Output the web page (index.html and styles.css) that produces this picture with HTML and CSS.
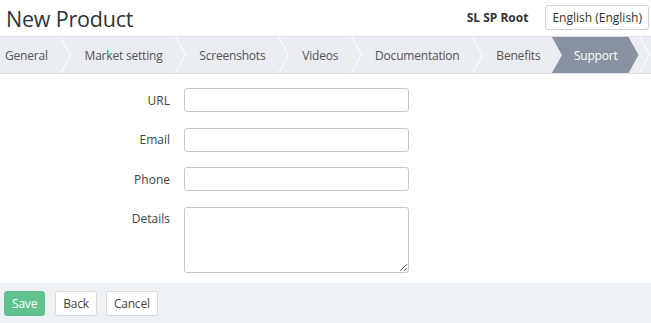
FILE: index.html
```
<!DOCTYPE html>
<html lang="en">
<head>
  <meta charset="UTF-8" />
  <meta name="viewport" content="width=device-width, initial-scale=1.0"/>
  <title>New Product</title>
  <link rel="stylesheet" href="styles.css">
</head>
<body>
  <header class="topbar">
    <h1 class="title">New Product</h1>
    <div class="account">
      <span class="account-name">SL SP Root</span>
      <button class="lang">English (English)</button>
    </div>
  </header>

  <nav class="steps">
    <span class="step first">General</span>
    <svg class="sep" viewBox="0 0 11 37"><polyline points="0.5,0 10.5,18.5 0.5,37" /></svg>
    <span class="step">Market setting</span>
    <svg class="sep" viewBox="0 0 11 37"><polyline points="0.5,0 10.5,18.5 0.5,37" /></svg>
    <span class="step">Screenshots</span>
    <svg class="sep" viewBox="0 0 11 37"><polyline points="0.5,0 10.5,18.5 0.5,37" /></svg>
    <span class="step">Videos</span>
    <svg class="sep" viewBox="0 0 11 37"><polyline points="0.5,0 10.5,18.5 0.5,37" /></svg>
    <span class="step">Documentation</span>
    <svg class="sep" viewBox="0 0 11 37"><polyline points="0.5,0 10.5,18.5 0.5,37" /></svg>
    <span class="step">Benefits</span>
    <span class="step active">Support</span>
    <svg class="sep" viewBox="0 0 11 37"><polyline points="0.5,0 10.5,18.5 0.5,37" /></svg>
  </nav>

  <main class="form">
    <label class="label" for="url">URL</label>
    <input class="field" id="url" type="text">

    <label class="label" for="email">Email</label>
    <input class="field" id="email" type="text">

    <label class="label" for="phone">Phone</label>
    <input class="field" id="phone" type="text">

    <label class="label top" for="details">Details</label>
    <textarea class="field area" id="details"></textarea>
  </main>

  <footer class="actions">
    <button class="btn save">Save</button>
    <button class="btn">Back</button>
    <button class="btn">Cancel</button>
  </footer>
</body>
</html>
```

FILE: styles.css
```
body {
  margin: 0;
  font-family: 'Open Sans', 'Noto Sans', sans-serif;
  font-size: 12px;
  color: #444;
  background: #fff;
  width: 651px;
  height: 323px;
  overflow: hidden;
  display: flex;
  flex-direction: column;
}

.topbar {
  height: 36px;
  display: flex;
  align-items: center;
  justify-content: space-between;
  padding: 0 2px 0 6px;
}

.title {
  margin: 0;
  font-size: 21.5px;
  font-weight: 400;
  color: #333;
  letter-spacing: -0.2px;
}

.account {
  display: flex;
  align-items: center;
  gap: 17px;
  margin-top: -2px;
}

.account-name {
  font-weight: 700;
  color: #333;
}

.lang {
  font-family: inherit;
  font-size: 12px;
  color: #333;
  background: #fff;
  border: 1px solid #cfd4da;
  border-radius: 3px;
  height: 25px;
  padding: 0 6px;
}

.steps {
  height: 36px;
  display: flex;
  align-items: stretch;
  background: #e9ecf0;
  border-top: 1px solid #dde1e6;
  border-bottom: 1px solid #dde1e6;
  color: #555;
  letter-spacing: -0.2px;
}

.step {
  display: flex;
  align-items: center;
  padding: 0 12.5px 0 13.3px;
  white-space: nowrap;
}

.step.first {
  padding-left: 5px;
}

.sep {
  width: 11px;
  height: 36px;
  flex: none;
}

.sep polyline {
  fill: none;
  stroke: #fff;
  stroke-width: 1;
}

.step.active {
  background: #8891a1;
  color: #fff;
  padding: 0 21px 0 22px;
  margin-left: -1px;
  clip-path: polygon(0 0, calc(100% - 10px) 0, 100% 50%, calc(100% - 10px) 100%, 0 100%, 10px 50%);
}

.form {
  flex: 1;
  display: grid;
  grid-template-columns: 170px 225px;
  column-gap: 14px;
  row-gap: 15.7px;
  align-content: start;
  padding-top: 14px;
}

.label {
  text-align: right;
  align-self: center;
  color: #444;
}

.label.top {
  align-self: start;
  padding-top: 3px;
}

.field {
  box-sizing: border-box;
  height: 24px;
  border: 1px solid #c3c9d0;
  border-radius: 3px;
  font-family: inherit;
  font-size: 12px;
  margin: 0;
}

.area {
  height: 66px;
  resize: vertical;
}

.actions {
  height: 40px;
  box-sizing: border-box;
  background: #eff2f5;
  display: flex;
  align-items: center;
  gap: 9px;
  padding: 0 4px;
}

.btn {
  font-family: inherit;
  font-size: 12px;
  letter-spacing: -0.2px;
  height: 25px;
  padding: 0 7px;
  color: #444;
  background: #fff;
  border: 1px solid #d6dadf;
  border-radius: 3px;
}

.btn.save {
  background: #5fc290;
  border-color: #5fc290;
  color: #fff;
  margin-right: 1px;
}
```
